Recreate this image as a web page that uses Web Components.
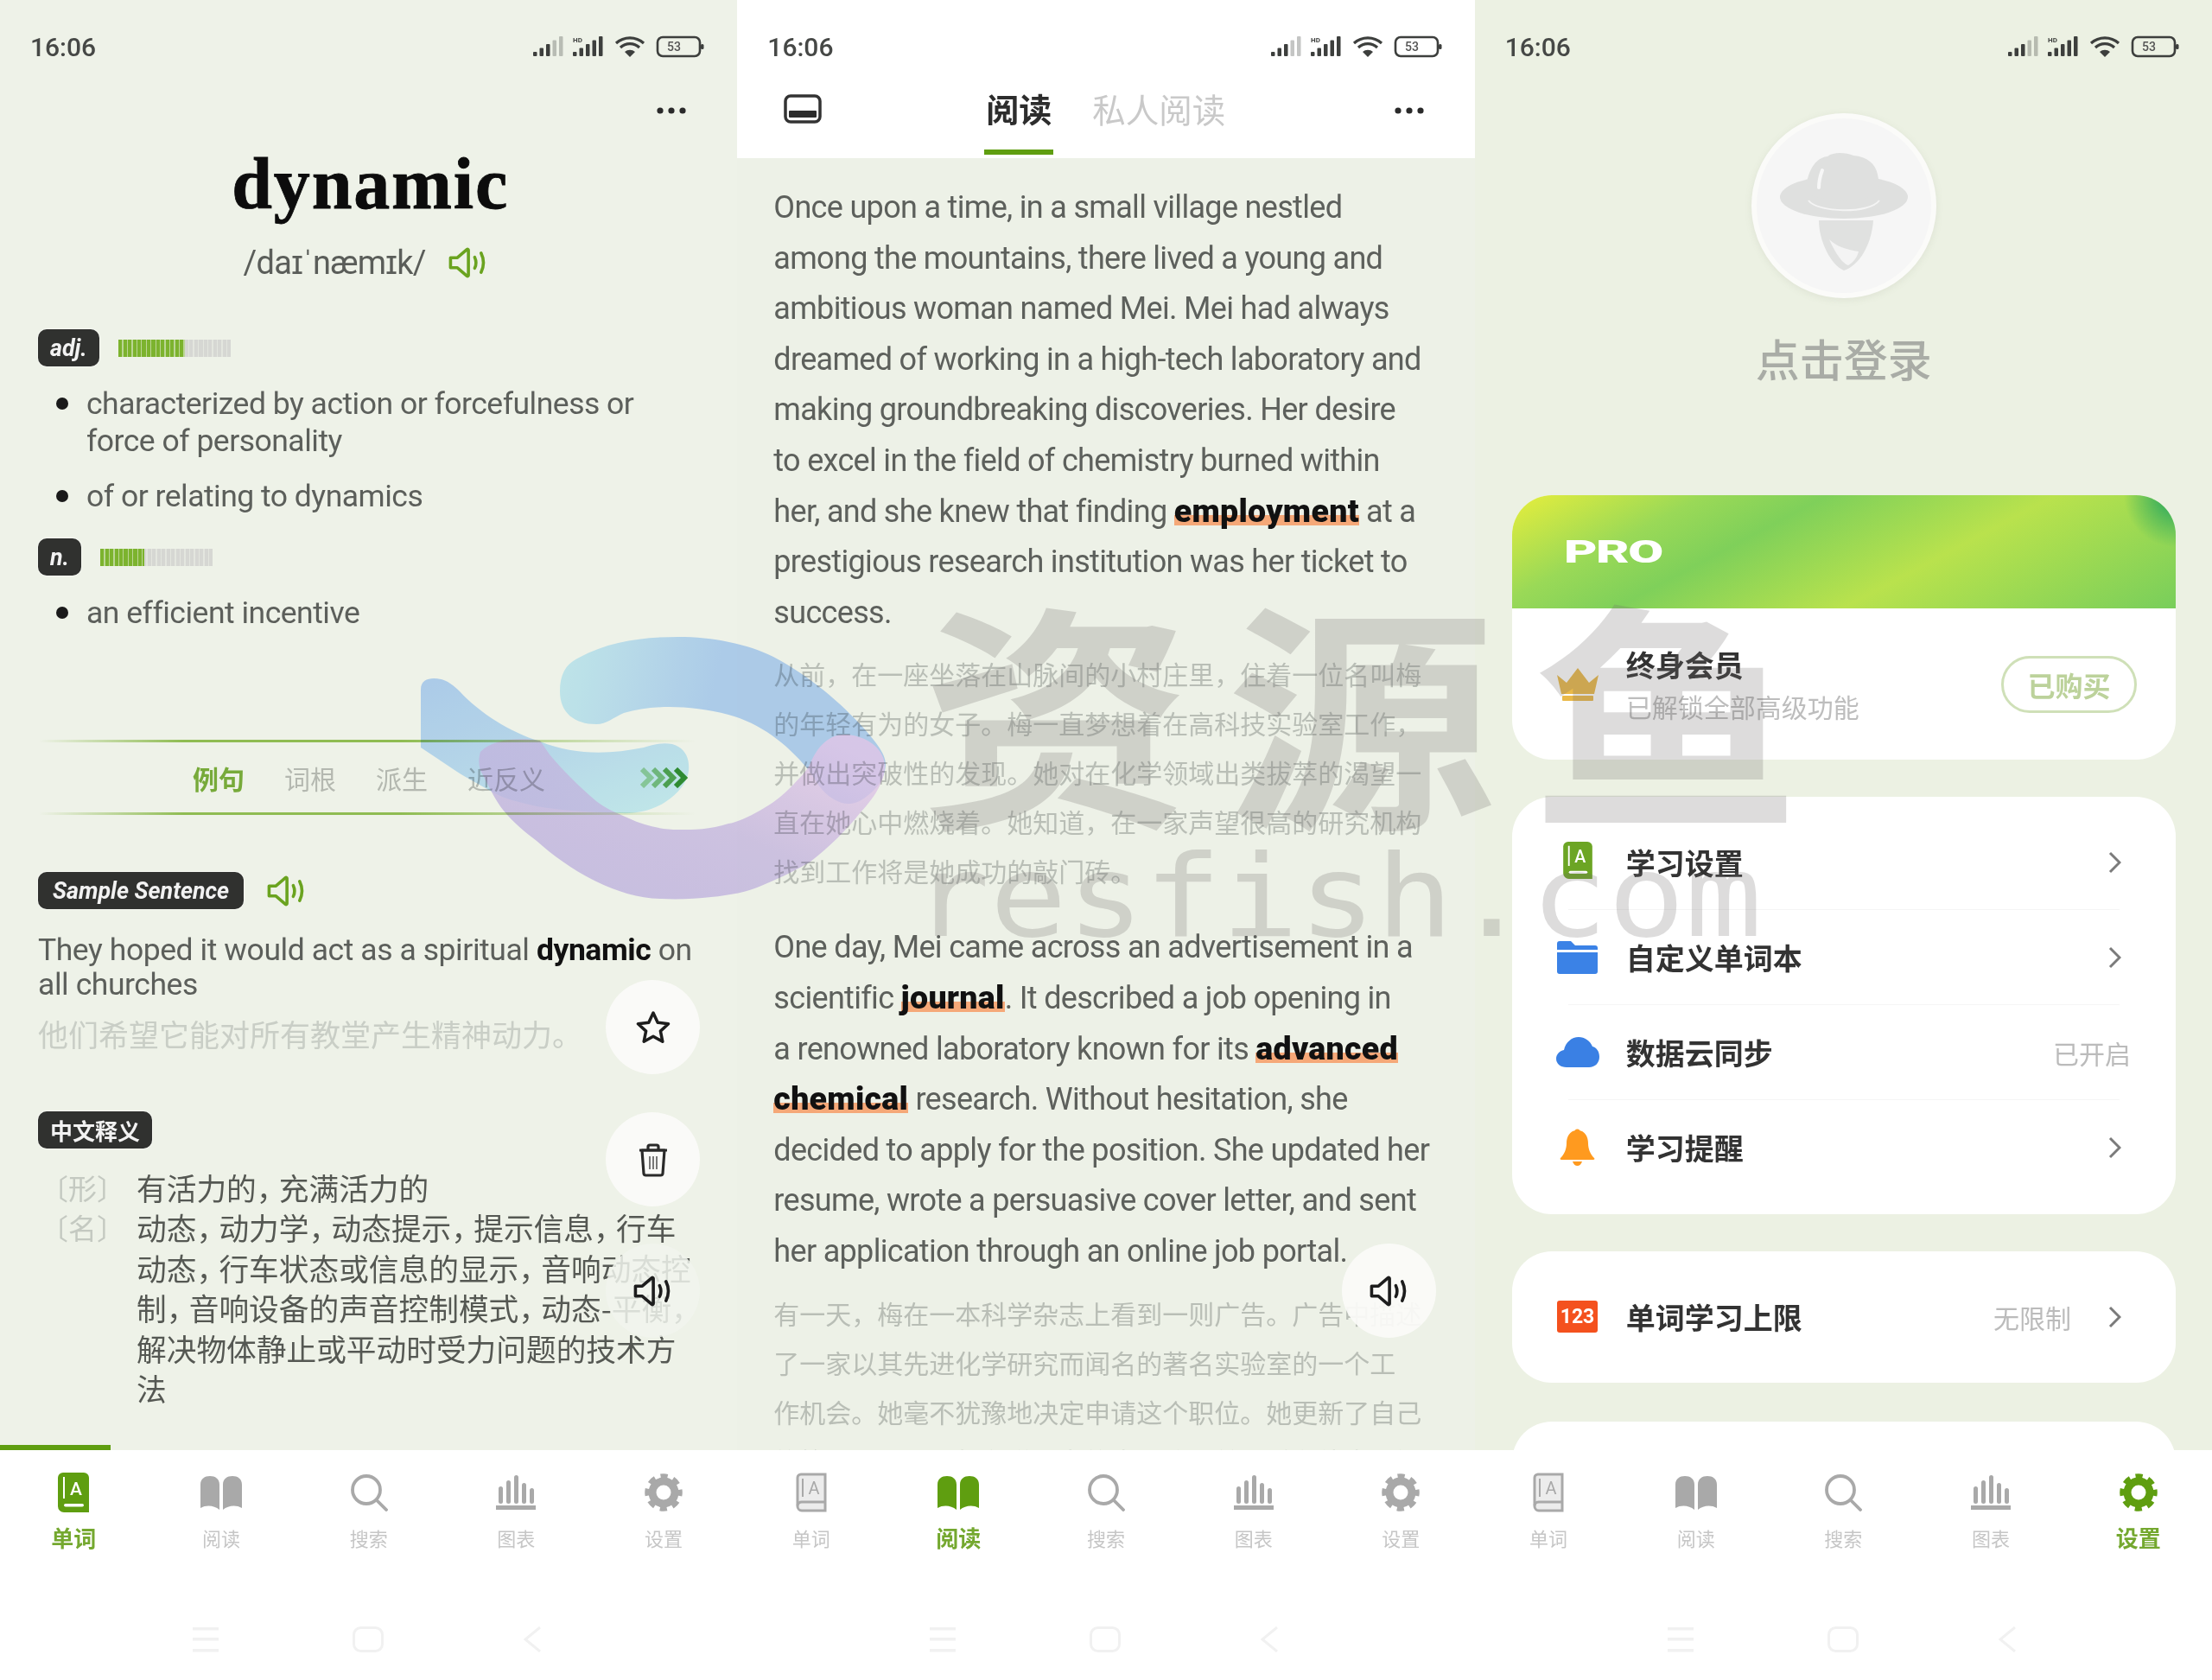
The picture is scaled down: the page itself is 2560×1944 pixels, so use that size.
<!DOCTYPE html>
<html lang="zh">
<head>
<meta charset="utf-8">
<title>Vocabulary app</title>
<style>
  html, body { margin: 0; padding: 0; background: #fff; }
  body { font-family: Roboto, "Noto Sans CJK SC", sans-serif; }
</style>
</head>
<body>
<app-stage>
  <phone-screen bg="#eef2e8" active="0" progress>
    <status-bar slot="top"></status-bar>
    <word-panel></word-panel>
  </phone-screen>
  <phone-screen bg="#edf1e7" active="1">
    <status-bar slot="top" white></status-bar>
    <read-panel></read-panel>
  </phone-screen>
  <phone-screen bg="#ecf1e3" active="4">
    <status-bar slot="top"></status-bar>
    <settings-panel></settings-panel>
  </phone-screen>
</app-stage>

<script>
const CJK = '"Noto Sans CJK SC", sans-serif';
const GREEN = '#5f9e10';

// the original font sets its commas narrower than a full em
function tight(str) {
  return str.replace(/，/g, '<span class="p">，</span>');
}

function speaker(color, w = 48, h = 38) {
  return `<svg width="${w}" height="${h}" viewBox="0 0 45 36" fill="none" stroke="${color}" stroke-width="3.400" stroke-linecap="round" stroke-linejoin="round">
    <path d="M3 12.500h7.500L21 3.500c.8-.6 1.600-.2 1.600.8v27.400c0 1-.8 1.400-1.600.8l-10.500-9H3z"/>
    <path d="M29.500 12c1.800 3.800 1.800 8.200 0 12"/><path d="M36.500 7.500c3.200 6.500 3.200 14.500 0 21"/></svg>`;
}
function dots() {
  return `<svg width="34" height="8" viewBox="0 0 34 8" fill="#2a2a2a"><circle cx="4" cy="4" r="3.600"/><circle cx="17" cy="4" r="3.600"/><circle cx="30" cy="4" r="3.600"/></svg>`;
}
function bookIcon(fill, w = 36, h = 46) {
  return `<svg width="${w}" height="${h}" viewBox="0 0 36 46">
    <path d="M6 0h24a6 6 0 0 1 6 6v40H7a7 7 0 0 1-7-7V6a6 6 0 0 1 6-6z" fill="${fill}"/>
    <path d="M7 5v25" stroke="#fff" stroke-width="2"/>
    <text x="21" y="26" font-family="Roboto" font-size="21" font-weight="500" fill="#fff" text-anchor="middle">A</text>
    <rect x="7" y="36" width="23" height="3.600" rx="1.800" fill="#fff"/></svg>`;
}
function bookOutline(stroke) {
  return `<svg width="36" height="46" viewBox="0 0 36 46">
    <path d="M6 2h28v42H7a5 5 0 0 1-5-5V6a4 4 0 0 1 4-4z" fill="#ececec" stroke="${stroke}" stroke-width="3"/>
    <path d="M2 38a5 5 0 0 1 5-4h27" fill="none" stroke="${stroke}" stroke-width="3"/>
    <path d="M8 7v21" stroke="${stroke}" stroke-width="2"/>
    <text x="21" y="25" font-family="Roboto" font-size="20" fill="${stroke}" text-anchor="middle">A</text></svg>`;
}
function openBook(fill) {
  return `<svg width="50" height="40" viewBox="0 0 50 40" fill="${fill}">
    <path d="M1 38V11C1 4 6 1 12 1s11 3 11 10v29c-6-5-15-6-22-2z"/>
    <path d="M49 38V11c0-7-5-10-11-10S27 4 27 11v29c6-5 15-6 22-2z"/></svg>`;
}
function searchIcon(stroke) {
  return `<svg width="44" height="44" viewBox="0 0 44 44" fill="none" stroke="${stroke}" stroke-width="3.800" stroke-linecap="round"><circle cx="19" cy="19" r="16"/><path d="M31 31l11 11"/></svg>`;
}
function chartIcon(fill) {
  return `<svg width="46" height="40" viewBox="0 0 46 40" fill="${fill}">
    <rect x="3" y="13" width="5" height="20" rx="2.500"/><rect x="12" y="6" width="5" height="27" rx="2.500"/>
    <rect x="21" y="0" width="5" height="33" rx="2.500"/><rect x="30" y="9" width="5" height="24" rx="2.500"/>
    <rect x="39" y="15" width="5" height="18" rx="2.500"/><rect x="0" y="35" width="46" height="5"/></svg>`;
}
function gearIcon(fill) {
  return `<svg width="44" height="44" viewBox="0 0 44 44" fill="none" stroke="${fill}">
    <circle cx="22" cy="22" r="13" stroke-width="9"/>
    <circle cx="22" cy="22" r="18.500" stroke-width="6.500" stroke-dasharray="8 6.530" stroke-dashoffset="4"/></svg>`;
}

const TAB_NAMES = ['单词', '阅读', '搜索', '图表', '设置'];
function tabIcon(i, on) {
  const g = '#5f9e10', c = '#a9a9a9';
  if (i === 0) return on ? bookIcon(g) : bookOutline(c);
  if (i === 1) return openBook(on ? g : c);
  if (i === 2) return searchIcon(on ? g : c);
  if (i === 3) return chartIcon(on ? g : c);
  return gearIcon(on ? g : c);
}

class AppStage extends HTMLElement {
  connectedCallback() {
    this.attachShadow({ mode: 'open' }).innerHTML = `
      <style>
        :host { display: block; position: relative; width: 2560px; height: 1944px; overflow: hidden; }
        .row { display: grid; grid-template-columns: repeat(3, 1fr); height: 100%; }
      </style>
      <div class="row"><slot></slot></div>
      <brand-swirl></brand-swirl>
      <site-watermark></site-watermark>`;
  }
}

class PhoneScreen extends HTMLElement {
  connectedCallback() {
    const active = Number(this.getAttribute('active'));
    const tabs = TAB_NAMES.map((name, i) => `
      <div class="tab ${i === active ? 'on' : ''}">
        <div class="ico">${tabIcon(i, i === active)}</div>
        <div class="lbl">${name}</div>
      </div>`).join('');
    this.attachShadow({ mode: 'open' }).innerHTML = `
      <style>
        :host { display: flex; flex-direction: column; height: 1944px; min-width: 0; overflow: hidden; background: ${this.getAttribute('bg')}; }
        .body { flex: 1; min-height: 0; overflow: hidden; position: relative; }
        .progress { position: absolute; left: 0; bottom: 0; width: 128px; height: 6px; background: ${GREEN}; }
        .tabs { flex: 0 0 266px; background: #fff; display: flex; flex-direction: column; position: relative; z-index: 2; }
        .items { display: flex; padding-top: 24px; }
        .tab { flex: 1; display: flex; flex-direction: column; align-items: center; }
        .ico { height: 50px; display: flex; align-items: center; justify-content: center; }
        .lbl { margin-top: 10px; height: 34px; line-height: 34px; font-size: 22px; color: #c6c6c6; font-family: ${CJK}; }
        .on .lbl { font-size: 26px; font-weight: 700; color: #74a82f; }
      </style>
      <slot name="top"></slot>
      <div class="body">
        <slot></slot>
        ${this.hasAttribute('progress') ? '<div class="progress"></div>' : ''}
      </div>
      <div class="tabs">
        <div class="items">${tabs}</div>
        <sys-nav></sys-nav>
      </div>`;
  }
}

class SysNav extends HTMLElement {
  connectedCallback() {
    this.attachShadow({ mode: 'open' }).innerHTML = `
      <style>
        :host { display: grid; grid-template-columns: 223px 30px 155px 36px 161px 22px; margin-top: 86px; height: 32px; }
        svg { display: block; }
      </style>
      <span></span>
      <svg width="30" height="30" viewBox="0 0 30 30" fill="#f1f1f1"><rect y="1" width="30" height="3.500"/><rect y="13" width="30" height="3.500"/><rect y="26" width="30" height="3.500"/></svg>
      <span></span>
      <svg width="36" height="30" viewBox="0 0 36 30" fill="none" stroke="#f1f1f1" stroke-width="3"><rect x="1.500" y="1.500" width="33" height="27" rx="8"/></svg>
      <span></span>
      <svg width="22" height="30" viewBox="0 0 22 30" fill="none" stroke="#f1f1f1" stroke-width="3"><path d="M20 1L3 15l17 14"/></svg>`;
  }
}

class StatusBar extends HTMLElement {
  connectedCallback() {
    const bars = (x0, n, light) => {
      let out = '';
      for (let i = 0; i < n; i++) {
        const h = 5 + i * 4.500;
        const op = i >= n - light ? 0.3 : 1;
        out += `<rect x="${x0 + i * 7.500}" y="${24 - h}" width="4.500" height="${h}" rx="1" opacity="${op}"/>`;
      }
      return out;
    };
    this.attachShadow({ mode: 'open' }).innerHTML = `
      <style>
        :host { display: flex; align-items: center; justify-content: space-between; height: 82px; padding: 0 38px 0 35px; box-sizing: border-box; background: ${this.hasAttribute('white') ? '#fff' : 'transparent'}; }
        .time { font: 500 30px Roboto, sans-serif; color: #464846; padding-top: 26px; }
        svg { display: block; margin-top: 26px; }
      </style>
      <span class="time">16:06</span>
      <svg width="200" height="26" viewBox="0 0 200 26" fill="#3d3f3d">
        ${bars(2, 5, 2)}
        ${bars(48, 5, 0)}
        <text x="48" y="8" font-family="Roboto" font-size="8" font-weight="700">HD</text>
        <path d="M98 9a24 24 0 0 1 32 0" fill="none" stroke="#3d3f3d" stroke-width="3.200"/>
        <path d="M103 14a16 16 0 0 1 22 0" fill="none" stroke="#3d3f3d" stroke-width="3.200"/>
        <path d="M108 19a9 9 0 0 1 12 0l-6 6z"/>
        <rect x="146" y="2" width="49" height="22" rx="6" fill="none" stroke="#3d3f3d" stroke-width="2.600"/>
        <rect x="196" y="10" width="3.500" height="6" rx="1.500"/>
        <text x="165" y="18" font-family="Roboto" font-size="14" font-weight="500" text-anchor="middle" fill="#555">53</text>
      </svg>`;
  }
}

class PosBadge extends HTMLElement {
  connectedCallback() {
    const cn = this.hasAttribute('cn');
    this.attachShadow({ mode: 'open' }).innerHTML = `
      <style>
        :host { display: inline-flex; align-items: center; height: 43px; padding: 0 ${this.hasAttribute('wide') ? 17 : 14}px; background: #30312f; color: #f2f2f2; border-radius: 10px; box-sizing: border-box;
          font: ${cn ? '700 26px ' + CJK : 'italic 700 26.800px Roboto, sans-serif'}; white-space: nowrap; box-shadow: 0 0 0 1px rgba(255,255,255,.4); }
      </style><slot></slot>`;
  }
}

class FreqBar extends HTMLElement {
  connectedCallback() {
    const on = this.getAttribute('value');
    this.attachShadow({ mode: 'open' }).innerHTML = `
      <style>
        :host { display: block; width: 130px; height: 20px; margin-left: 22px;
          background:
            repeating-linear-gradient(90deg, rgba(238,242,232,0) 0 4px, rgba(238,242,232,.55) 4px 5.500px),
            linear-gradient(90deg, #7cb32e ${on}px, #d6d7d3 ${on}px); }
      </style>`;
  }
}

class SectionTabs extends HTMLElement {
  connectedCallback() {
    this.attachShadow({ mode: 'open' }).innerHTML = `
      <style>
        :host { display: block; margin: 0 48px 0 45px; font-family: ${CJK}; }
        .ln { height: 3px; background: linear-gradient(90deg, rgba(125,175,60,0) 0, #8fbc52 22%, #8fbc52 55%, rgba(125,175,60,0) 100%); }
        .items { height: 81px; display: flex; align-items: center; font-size: 30px; color: #b4b8b0; }
        .items span { margin-right: 46px; white-space: nowrap; }
        .items .on { color: #77aa3a; font-weight: 700; margin-left: 178px; }
        svg { margin-left: auto; margin-right: 8px; }
      </style>
      <div class="ln"></div>
      <div class="items">
        <span class="on">例句</span><span>词根</span><span>派生</span><span>近反义</span>
        <svg width="56" height="24" viewBox="0 0 56 24" fill="none" stroke-width="6">
          <path d="M2 2l10 10L2 22" stroke="#a9d498"/><path d="M15 2l10 10-10 10" stroke="#8cc47c"/>
          <path d="M28 2l10 10-10 10" stroke="#5eaa50"/><path d="M41 2l10 10-10 10" stroke="#3a9432"/>
        </svg>
      </div>
      <div class="ln"></div>`;
  }
}

class WordPanel extends HTMLElement {
  connectedCallback() {
    this.attachShadow({ mode: 'open' }).innerHTML = `
      <style>
        :host { display: block; height: 100%; position: relative; }
        .top { height: 84px; display: flex; justify-content: flex-end; align-items: center; padding: 8px 59px 0 0; box-sizing: border-box; }
        h1 { margin: 5px 0 0; padding-left: 4px; text-align: center; font: 700 84px/84px "Liberation Serif", serif; color: #0c0c0c; letter-spacing: 1.800px; -webkit-text-stroke: .8px #0c0c0c; }
        .phon { margin-top: 27px; height: 44px; display: flex; justify-content: center; align-items: center; gap: 25px; padding-right: 6px; font: 400 38px/44px Roboto, sans-serif; color: #5a5d59; letter-spacing: -.7px; }
        .head { display: flex; align-items: center; margin-left: 44px; }
        .h1 { margin-top: 55px; }
        ul { list-style: none; margin: 22px 0 0; padding: 0 0 0 100px; font: 400 35.500px/43px Roboto, sans-serif; color: #5c5f5b; letter-spacing: -.5px; white-space: nowrap; }
        li { position: relative; }
        li + li { margin-top: 21px; }
        li::before { content: ""; position: absolute; left: -35px; top: 14px; width: 14px; height: 14px; border-radius: 50%; background: #1a1a1a; }
        .n { margin-top: 27px; }
        section-tabs { margin-top: 125px; }
        .ss { margin-top: 66px; }
        .ss svg { margin-left: 26px; }
        .sent { margin: 27px 0 0 44px; font: 400 35.500px/40px Roboto, sans-serif; color: #5c5f5b; letter-spacing: -.43px; white-space: nowrap; }
        .sent b { color: #111; font-weight: 700; }
        .tr { margin: 17px 0 0 44px; font: 400 35px/40px ${CJK}; color: #c9cec6; white-space: nowrap; }
        .cnb { margin: 70px 0 0 44px; }
        .rows { margin: 22px 0 0 46px; display: grid; grid-template-columns: 112px 1fr; font: 400 34.700px/46.400px ${CJK}; color: #555853; white-space: nowrap; }
        .p { letter-spacing: -.25em; }
        .tag { color: #c4c9c1; font-size: 33px; }
        fab-button { position: absolute; left: 701px; }
      </style>
      <div class="top">${dots()}</div>
      <h1>dynamic</h1>
      <div class="phon"><span>/daɪˈnæmɪk/</span>${speaker('#6aa31f')}</div>
      <div class="head h1"><pos-badge>adj.</pos-badge><freq-bar value="77"></freq-bar></div>
      <ul>
        <li>characterized by action or forcefulness or<br>force of personality</li>
        <li>of or relating to dynamics</li>
      </ul>
      <div class="head n"><pos-badge>n.</pos-badge><freq-bar value="51"></freq-bar></div>
      <ul><li>an efficient incentive</li></ul>
      <section-tabs></section-tabs>
      <div class="head ss"><pos-badge wide>Sample Sentence</pos-badge>${speaker('#6aa31f')}</div>
      <div class="sent">They hoped it would act as a spiritual <b>dynamic</b> on<br>all churches</div>
      <div class="tr">他们希望它能对所有教堂产生精神动力。</div>
      <div class="cnb"><pos-badge cn>中文释义</pos-badge></div>
      <div class="rows">
        <span class="tag">〔形〕</span><span>${tight('有活力的，充满活力的')}</span>
        <span class="tag">〔名〕</span><span>${tight('动态，动力学，动态提示，提示信息，行车<br>动态，行车状态或信息的显示，音响动态控<br>制，音响设备的声音控制模式，动态-平衡，<br>解决物体静止或平动时受力问题的技术方<br>法')}</span>
      </div>
      <fab-button icon="star" style="top:1052px"></fab-button>
      <fab-button icon="trash" style="top:1205px"></fab-button>
      <fab-button icon="speaker" soft style="top:1357px"></fab-button>`;
  }
}

class FabButton extends HTMLElement {
  connectedCallback() {
    const icons = {
      star: `<svg width="40" height="40" viewBox="0 0 40 40" fill="none" stroke="#1d1d1d" stroke-width="3.500" stroke-linejoin="round"><path d="M20 3l5.200 11.200 12.300 1.500-9.100 8.400 2.400 12.100L20 30.200 9.200 36.200l2.400-12.100-9.100-8.400 12.300-1.500z"/></svg>`,
      trash: `<svg width="36" height="40" viewBox="0 0 36 40" fill="none" stroke="#2a2a2a" stroke-width="3.200" stroke-linejoin="round"><path d="M2 9h32M12 9V5a2 2 0 0 1 2-2h8a2 2 0 0 1 2 2v4"/><path d="M5 9l2 27a2.500 2.500 0 0 0 2.500 2h17a2.500 2.500 0 0 0 2.500-2l2-27z"/><path d="M14 16v15M22 16v15M18 16v15" stroke-width="2" stroke="#777"/></svg>`,
      speaker: speaker('#1d1d1d')
    };
    const soft = this.hasAttribute('soft');
    this.attachShadow({ mode: 'open' }).innerHTML = `
      <style>
        :host { display: flex; align-items: center; justify-content: center; width: 109px; height: 109px; border-radius: 50%; z-index: 1;
          background: ${soft ? 'rgba(241,244,237,.85)' : 'rgba(251,251,249,.92)'}; }
      </style>${icons[this.getAttribute('icon')]}`;
  }
}

class ReadPanel extends HTMLElement {
  connectedCallback() {
    this.attachShadow({ mode: 'open' }).innerHTML = `
      <style>
        :host { display: block; height: 100%; position: relative; }
        header { height: 101px; background: #fff; display: flex; align-items: center; padding: 0 59px 14px 54px; box-sizing: border-box; font: 400 38px/1 ${CJK}; position: relative; }
        .hd { margin-left: 190px; display: flex; gap: 47px; }
        .cur { color: #2d2d2d; font-weight: 700; position: relative; }
        .cur::after { content: ""; position: absolute; left: -2px; right: -2px; top: 67px; height: 6px; background: ${GREEN}; }
        .oth { color: #c9c9c9; font-size: 38.500px; }
        .dot { margin-left: auto; padding-top: 5px; }
        header svg { display: block; }
        article { padding: 28px 40px 0 42px; font: 400 36px/58.600px Roboto, sans-serif; color: #5d605c; letter-spacing: -.68px; white-space: nowrap; }
        p { margin: 0; }
        .cn { margin-top: 13px; font: 400 30px/57px ${CJK}; color: #b9beb6; letter-spacing: 0; }
        .en2 { margin-top: 31px; }
        b { color: #111; font-weight: 900; font-size: 37.500px; line-height: 0; letter-spacing: .3px; background: linear-gradient(transparent 62%, #f5a878 62%, #f5a878 88%, transparent 88%); }
        fab-button { position: absolute; left: 700px; top: 1357px; }
      </style>
      <header>
        <svg width="44" height="34" viewBox="0 0 44 34" fill="none"><rect x="2" y="2" width="40" height="30" rx="6" stroke="#333" stroke-width="3.500"/><rect x="6" y="19" width="32" height="8" rx="1" fill="#2c2c2c"/></svg>
        <div class="hd"><span class="cur">阅读</span><span class="oth">私人阅读</span></div>
        <div class="dot">${dots()}</div>
      </header>
      <article>
        <p>Once upon a time, in a small village nestled<br>among the mountains, there lived a young and<br>ambitious woman named Mei. Mei had always<br>dreamed of working in a high-tech laboratory and<br>making groundbreaking discoveries. Her desire<br>to excel in the field of chemistry burned within<br>her, and she knew that finding <b>employment</b> at a<br>prestigious research institution was her ticket to<br>success.</p>
        <p class="cn">从前，在一座坐落在山脉间的小村庄里，住着一位名叫梅<br>的年轻有为的女子。梅一直梦想着在高科技实验室工作，<br>并做出突破性的发现。她对在化学领域出类拔萃的渴望一<br>直在她心中燃烧着。她知道，在一家声望很高的研究机构<br>找到工作将是她成功的敲门砖。</p>
        <p class="en2">One day, Mei came across an advertisement in a<br>scientific <b>journal</b>. It described a job opening in<br>a renowned laboratory known for its <b>advanced</b><br><b>chemical</b> research. Without hesitation, she<br>decided to apply for the position. She updated her<br>resume, wrote a persuasive cover letter, and sent<br>her application through an online job portal.</p>
        <p class="cn">有一天，梅在一本科学杂志上看到一则广告。广告中描述<br>了一家以其先进化学研究而闻名的著名实验室的一个工<br>作机会。她毫不犹豫地决定申请这个职位。她更新了自己<br>的简历，写了一封有说服力的求职信，并通过在线求职门</p>
      </article>
      <fab-button icon="speaker" style="top:1357px"></fab-button>`;
  }
}

class SettingRow extends HTMLElement {
  connectedCallback() {
    const val = this.getAttribute('value');
    const arrow = !this.hasAttribute('no-arrow');
    this.attachShadow({ mode: 'open' }).innerHTML = `
      <style>
        :host { display: flex; align-items: center; height: 109px; padding: 0 ${arrow ? 63 : 52}px 0 46px; font-family: ${CJK}; }
        .ic { width: 60px; display: flex; justify-content: center; align-items: center; margin-right: 26px; }
        .t { font-size: 34px; font-weight: 700; color: #333; white-space: nowrap; }
        .v { margin-left: auto; font-size: 30px; color: #bbb; white-space: nowrap; }
        svg.ch { margin-left: ${val ? 43 : 0}px; }
        .sp { margin-left: auto; }
      </style>
      <span class="ic"><slot name="icon"></slot></span>
      <span class="t">${this.getAttribute('label')}</span>
      ${val ? `<span class="v">${val}</span>` : '<span class="sp"></span>'}
      ${arrow ? '<svg class="ch" width="15" height="28" viewBox="0 0 15 28" fill="none" stroke="#7b7b7b" stroke-width="3"><path d="M2 3l11 11L2 25"/></svg>' : ''}`;
  }
}

class SettingsPanel extends HTMLElement {
  connectedCallback() {
    this.attachShadow({ mode: 'open' }).innerHTML = `
      <style>
        :host { display: block; height: 100%; padding: 0 42px 0 43px; box-sizing: border-box; font-family: ${CJK}; }
        .avatar { width: 214px; height: 214px; margin: 49px auto 0; border-radius: 50%; background: #f6f6f6; border: 6px solid #fbfbf9; box-sizing: border-box; box-shadow: 0 2px 8px rgba(120,130,110,.12); }
        .avatar svg { display: block; }
        .login { margin-top: 39px; text-align: center; font-size: 51px; line-height: 60px; color: #a9aca6; font-weight: 500; }
        .card { background: #fff; border-radius: 46px; overflow: hidden; }
        .pro { margin-top: 129px; }
        .banner { height: 131px; display: flex; align-items: center; padding-left: 60px;
          background: radial-gradient(circle at 100% 0, #18a05f 0, rgba(40,170,95,0) 60px), linear-gradient(152deg, #e7ee3c 0%, #9ad957 22%, #7fd05a 36%, #b9e24d 62%, #a8dd50 72%, #78ce5b 100%); }
        .banner span { display: inline-block; color: #fff; font: 900 36px/1 Roboto, sans-serif; transform: scaleX(1.650); transform-origin: 0 50%; letter-spacing: -1px; }
        .member { height: 175px; display: flex; align-items: center; padding: 0 45px 0 46px; box-sizing: border-box; }
        .crown { width: 60px; display: flex; justify-content: center; margin-right: 26px; }
        .mt { font-size: 34px; font-weight: 700; color: #333; line-height: 50px; }
        .ms { font-size: 30px; color: #bdbdbd; line-height: 46px; }
        .buy { margin-left: auto; width: 157px; height: 66px; border: 3px solid #cfe0b8; border-radius: 33px; box-sizing: border-box; display: flex; align-items: center; justify-content: center; color: #bcd29b; font-size: 32px; font-weight: 700; }
        .list { margin-top: 43px; padding: 21px 0 23px; }
        .div { height: 1px; margin: 0 65px; background: #f5f5f5; }
        .limit { margin-top: 43px; padding: 21px 0 22px; }
        .last { margin-top: 45px; height: 120px; }
      </style>
      <div class="avatar">
        <svg width="202" height="202" viewBox="0 0 202 202">
          <path d="M72 118c0 24 14 52 29 58 18-6 32-30 34-58z" fill="#e0e1e0"/>
          <path d="M84 140c8 18 16 28 22 30 6-4 10-8 12-16-14-2-26-6-34-14z" fill="#f4f4f4"/>
          <ellipse cx="101" cy="91" rx="74" ry="25" fill="#dfe0df"/>
          <path d="M56 86c2-18 8-40 26-42 8-6 22-4 30-1 16 1 26 10 28 22 2 8 2 16 2 22-28 12-62 10-86-1z" fill="#dfe0df"/>
          <path d="M60 95c10 14 70 16 82 0" fill="none" stroke="#f4f4f4" stroke-width="2"/>
          <path d="M76 60c-3 8-4 14-4 20" fill="none" stroke="#f7f7f7" stroke-width="4" stroke-linecap="round"/>
        </svg>
      </div>
      <div class="login">点击登录</div>
      <div class="card pro">
        <div class="banner"><span>PRO</span></div>
        <div class="member">
          <span class="crown"><svg width="52" height="40" viewBox="0 0 52 40" fill="#e9b949"><path d="M2 9l11 9L26 1l13 17 11-9-5 22H7z"/><rect x="8" y="33" width="36" height="6" rx="1"/></svg></span>
          <div><div class="mt">终身会员</div><div class="ms">已解锁全部高级功能</div></div>
          <div class="buy">已购买</div>
        </div>
      </div>
      <div class="card list">
        <setting-row label="学习设置"><span slot="icon">${bookIcon('#6ca524', 36, 43)}</span></setting-row>
        <div class="div"></div>
        <setting-row label="自定义单词本"><svg slot="icon" width="47" height="38" viewBox="0 0 47 38"><path d="M3 0h13l5 5h23a3 3 0 0 1 3 3v2H0V3a3 3 0 0 1 3-3z" fill="#3b82e6"/><path d="M0 13h47v22a3 3 0 0 1-3 3H3a3 3 0 0 1-3-3z" fill="#3b82e6"/></svg></setting-row>
        <div class="div"></div>
        <setting-row label="数据云同步" value="已开启" no-arrow><svg slot="icon" width="50" height="35" viewBox="0 0 50 35" fill="#3a80e4"><path d="M12 35C5 35 0 31 0 25c0-5 4-9 9-10C11 6 18 0 26 0c7 0 13 4 16 11 5 1 8 6 8 12 0 7-5 12-12 12z"/></svg></setting-row>
        <div class="div"></div>
        <setting-row label="学习提醒"><svg slot="icon" width="41" height="43" viewBox="0 0 41 43" fill="#ff9a1f"><circle cx="20.500" cy="3.500" r="3"/><path d="M20.500 2C11 2 8 10 8 17c0 7-3 13-7 17-1 1 0 2 1 2h37c1 0 2-1 1-2-4-4-7-10-7-17 0-7-3-15-12.500-15z"/><path d="M15 38h11c-1 3-3 5-5.500 5S16 41 15 38z"/></svg></setting-row>
      </div>
      <div class="card limit">
        <setting-row label="单词学习上限" value="无限制"><svg slot="icon" width="47" height="37" viewBox="0 0 47 37"><rect width="47" height="37" rx="3" fill="#f4511e"/><text x="23.500" y="26" font-family="Roboto" font-size="23" font-weight="700" fill="#fff" text-anchor="middle">123</text></svg></setting-row>
      </div>
      <div class="card last"></div>`;
  }
}

class BrandSwirl extends HTMLElement {
  connectedCallback() {
    this.attachShadow({ mode: 'open' }).innerHTML = `
      <style>
        :host { position: absolute; left: 460px; top: 710px; width: 600px; height: 350px; pointer-events: none; mix-blend-mode: multiply; }
        svg { display: block; }
      </style>
      <svg width="600" height="350" viewBox="460 710 600 350">
        <defs>
          <linearGradient id="bl" x1="0" y1="0" x2="1" y2="0.100"><stop offset="0" stop-color="#cdf2ff"/><stop offset=".5" stop-color="#b9d6ff"/><stop offset="1" stop-color="#b9d6ff"/></linearGradient>
          <linearGradient id="bf" x1="0.100" y1="0" x2="0.800" y2="1"><stop offset="0" stop-color="#b9d6ff"/><stop offset=".5" stop-color="#c2e2ff"/><stop offset="1" stop-color="#cdf2ff"/></linearGradient>
          <linearGradient id="pu" x1="0.100" y1="1" x2="1" y2="0.200"><stop offset="0" stop-color="#c8b7f4"/><stop offset=".55" stop-color="#d2bff5"/><stop offset="1" stop-color="#f4d1ff"/></linearGradient>
        </defs>
        <path fill="url(#bl)" d="M648 800C648 780 655 768 670 761C705 742 745 737 785 737C825 737 865 745 895 760C935 781 972 812 1000 843C1015 860 1025 873 1025 885C1024 900 1017 910 1005 920C990 933 977 932 965 925C950 916 945 904 935 890C910 860 880 837 843 827C800 816 755 815 722 825C710 830 702 838 690 838C665 838 648 825 648 800Z"/>
        <path fill="url(#bf)" d="M487 798C487 788 494 785 502 785C515 785 524 792 532 800C555 825 590 847 625 858C665 874 705 873 745 865C760 860 775 858 785 864C795 870 798 880 797 892C795 906 785 918 770 928C755 938 735 942 718 941C685 940 650 938 621 933C600 928 585 925 571 917C555 908 540 900 529 893L487 865Z"/>
        <path fill="url(#pu)" opacity=".78" d="M625 857C600 853 570 855 556 870C553 880 554 890 559 897C568 915 575 928 582 937C595 953 608 963 621 973C640 990 665 1008 690 1020C715 1032 740 1040 766 1040C785 1041 805 1040 823 1038C845 1036 865 1032 881 1025C902 1016 920 1008 938 997C960 980 980 960 996 940C1010 925 1024 905 1024 887C1024 865 1000 850 977 850C958 850 945 866 938 883C932 895 925 900 919 907C905 922 893 930 881 937C865 946 852 952 843 953C822 960 803 960 785 960C765 960 745 955 728 947C712 940 700 935 690 927C670 910 650 890 636 873Z"/>
      </svg>`;
  }
}

class SiteWatermark extends HTMLElement {
  connectedCallback() {
    this.attachShadow({ mode: 'open' }).innerHTML = `
      <style>
        :host { position: absolute; left: 1066px; top: 665px; pointer-events: none; color: rgba(113,110,110,.24); white-space: nowrap; }
        .big { font: 700 312px/340px ${CJK}; letter-spacing: 41px; transform: scaleY(.89); transform-origin: 0 0; }
        .url { margin-top: -32px; margin-left: -10px; font: 400 132px/128px "DejaVu Sans Mono", monospace; transform: scaleX(1.125); transform-origin: 0 0; }
      </style>
      <div class="big">资源鱼</div>
      <div class="url">resfish.com</div>`;
  }
}

customElements.define('app-stage', AppStage);
customElements.define('phone-screen', PhoneScreen);
customElements.define('sys-nav', SysNav);
customElements.define('status-bar', StatusBar);
customElements.define('pos-badge', PosBadge);
customElements.define('freq-bar', FreqBar);
customElements.define('section-tabs', SectionTabs);
customElements.define('word-panel', WordPanel);
customElements.define('fab-button', FabButton);
customElements.define('read-panel', ReadPanel);
customElements.define('setting-row', SettingRow);
customElements.define('settings-panel', SettingsPanel);
customElements.define('brand-swirl', BrandSwirl);
customElements.define('site-watermark', SiteWatermark);
</script>
</body>
</html>
